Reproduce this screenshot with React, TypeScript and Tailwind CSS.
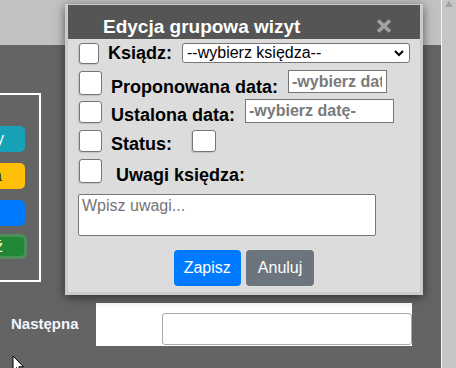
import React from 'react';

const Box = ({ className = '' }: { className?: string }) => (
  <input
    type="checkbox"
    className={`appearance-none shrink-0 bg-white border border-[#767676] rounded-[3px] shadow-[-1px_1px_1px_rgba(0,0,0,0.12)] ${className}`}
  />
);

export default function App() {
  return (
    <div className="relative w-[456px] h-[368px] overflow-hidden flex font-['Liberation_Sans',Arial,sans-serif]">
      {/* page behind the dialog */}
      <div className="flex-1 flex flex-col min-w-0">
        <div className="h-[45px] bg-[#c2c2c2]" />
        <div className="flex-1 bg-[#646464] flex flex-col">
          <div className="mt-[48px] -ml-[60px] w-[101px] h-[189px] border-2 border-white flex flex-col items-end pt-[31px]">
            <button className="mr-[14px] w-[200px] h-[26px] rounded-[5px] bg-[#17a2b8] text-white text-[16px] text-right pr-[21px] whitespace-nowrap overflow-hidden">
              Dodaj wizyty
            </button>
            <button className="mt-[11px] mr-[14px] w-[200px] h-[26px] rounded-[5px] bg-[#ffc107] text-[#212529] text-[16px] text-right pr-[23px] whitespace-nowrap overflow-hidden">
              Edytuj grupa
            </button>
            <button className="mt-[11px] mr-[14px] w-[200px] h-[26px] rounded-[5px] bg-[#007bff] text-white text-[16px] text-right pr-[30px] whitespace-nowrap overflow-hidden">
              Drukuj
            </button>
            <button className="mt-[8px] mr-[12px] w-[200px] h-[25px] rounded-[6px] bg-[#218838] border-[3px] border-[#4d8f5a] text-[#f4f0c0] text-[16px] text-right pr-[21px] whitespace-nowrap overflow-hidden leading-none">
              Zatwierdź
            </button>
          </div>

          <div className="mt-[21px] flex items-center h-[43px]">
            <div className="w-[96px] pl-[11px] text-[15px] font-bold text-[#f2f6ff]">Następna</div>
            <div className="w-[316px] h-[43px] bg-white pl-[66px] pt-[10px]">
              <input className="w-[250px] h-[32px] border border-[#aaaaaa] rounded-[3px] bg-white" />
            </div>
          </div>
        </div>
      </div>
      <div className="w-[15px] border-l border-[#f4f4f4] bg-[#c6c6c6] flex justify-center pt-[1px]">
        <svg width="8" height="6" viewBox="0 0 8 6">
          <polygon points="4,0 8,6 0,6" fill="#a3a3a3" />
        </svg>
      </div>

      {/* dialog */}
      <div className="absolute left-[65px] top-[4px] w-[358px] h-[291px] bg-[#dcdcdc] border-x-[3px] border-t border-b-[3px] border-[#cbcbcb] shadow-[0_2px_10px_rgba(0,0,0,0.55)] flex flex-col">
        <div className="h-[34px] bg-[#555555] flex items-start justify-between">
          <div className="pl-[35px] pt-[11px] text-[19px] leading-[22px] font-bold text-white">Edycja grupowa wizyt</div>
          <svg className="mr-[28px] mt-[14px]" width="16" height="14" viewBox="0 0 16 14">
            <path d="M2 1.5 L14 12.5 M14 1.5 L2 12.5" stroke="#a3a3a3" strokeWidth="3.6" />
          </svg>
        </div>

        <div className="flex-1 flex flex-col pl-[11px] pt-[4px] text-[18px] leading-[18px] font-bold text-black">
          <div className="flex items-start">
            <Box className="w-[20px] h-[21px]" />
            <span className="ml-[9px] mt-[1px]">Ksiądz:</span>
            <div className="relative ml-[10px]">
              <select className="appearance-none w-[228px] h-[20px] border border-[#767676] rounded-[3px] bg-white pl-[4px] py-0 text-[16px] leading-[18px] font-normal">
                <option>--wybierz księdza--</option>
              </select>
              <svg className="absolute right-[6px] top-[7px]" width="10" height="7" viewBox="0 0 10 7">
                <path d="M1 1 L5 5 L9 1" stroke="#000" strokeWidth="2" fill="none" />
              </svg>
            </div>
          </div>

          <div className="mt-[6px] flex items-start">
            <Box className="mt-[1px] w-[23px] h-[24px]" />
            <span className="ml-[9px] mt-[8px]">Proponowana data:</span>
            <input
              placeholder="-wybierz datę-"
              className="ml-[10px] w-[99px] h-[23px] border border-[#767676] bg-white pl-[3px] pr-[4px] text-[16px] font-bold placeholder:text-[#7a7a7a]"
            />
          </div>

          <div className="mt-[3px] flex items-start">
            <Box className="mt-[2px] w-[23px] h-[22px]" />
            <span className="ml-[9px] mt-[7px]">Ustalona data:</span>
            <input
              placeholder="-wybierz datę-"
              className="ml-[10px] w-[149px] h-[24px] border border-[#767676] bg-white pl-[3px] text-[16px] font-bold placeholder:text-[#7a7a7a]"
            />
          </div>

          <div className="mt-[6px] flex items-start">
            <Box className="w-[23px] h-[22px]" />
            <span className="ml-[9px] mt-[5px]">Status:</span>
            <Box className="ml-[20px] w-[24px] h-[22px]" />
          </div>

          <div className="mt-[6px] flex items-start">
            <Box className="w-[23px] h-[24px]" />
            <span className="ml-[14px] mt-[7px]">Uwagi księdza:</span>
          </div>

          <textarea
            placeholder="Wpisz uwagi..."
            className="mt-[10px] -ml-[1px] w-[298px] h-[42px] resize-none border border-[#767676] rounded-[2px] bg-white px-[3px] pt-[1px] text-[16px] leading-[19px] font-normal placeholder:text-[#757575]"
          />

          <div className="mt-[14px] -ml-[11px] flex justify-center gap-[5px]">
            <button className="h-[36px] px-[10px] rounded-[4px] bg-[#007bff] text-white text-[16px] font-normal">Zapisz</button>
            <button className="h-[36px] px-[12px] rounded-[4px] bg-[#6c757d] text-white text-[16px] font-normal">Anuluj</button>
          </div>
        </div>
      </div>

      {/* mouse pointer */}
      <svg className="absolute left-[12px] top-[355px]" width="14" height="20" viewBox="0 0 14 20">
        <path d="M1 1 L1 16 L4.5 12.5 L7 18 L9 17 L6.8 11.8 L11.5 11.8 Z" fill="#fff" stroke="#000" strokeWidth="1" />
      </svg>
    </div>
  );
}
